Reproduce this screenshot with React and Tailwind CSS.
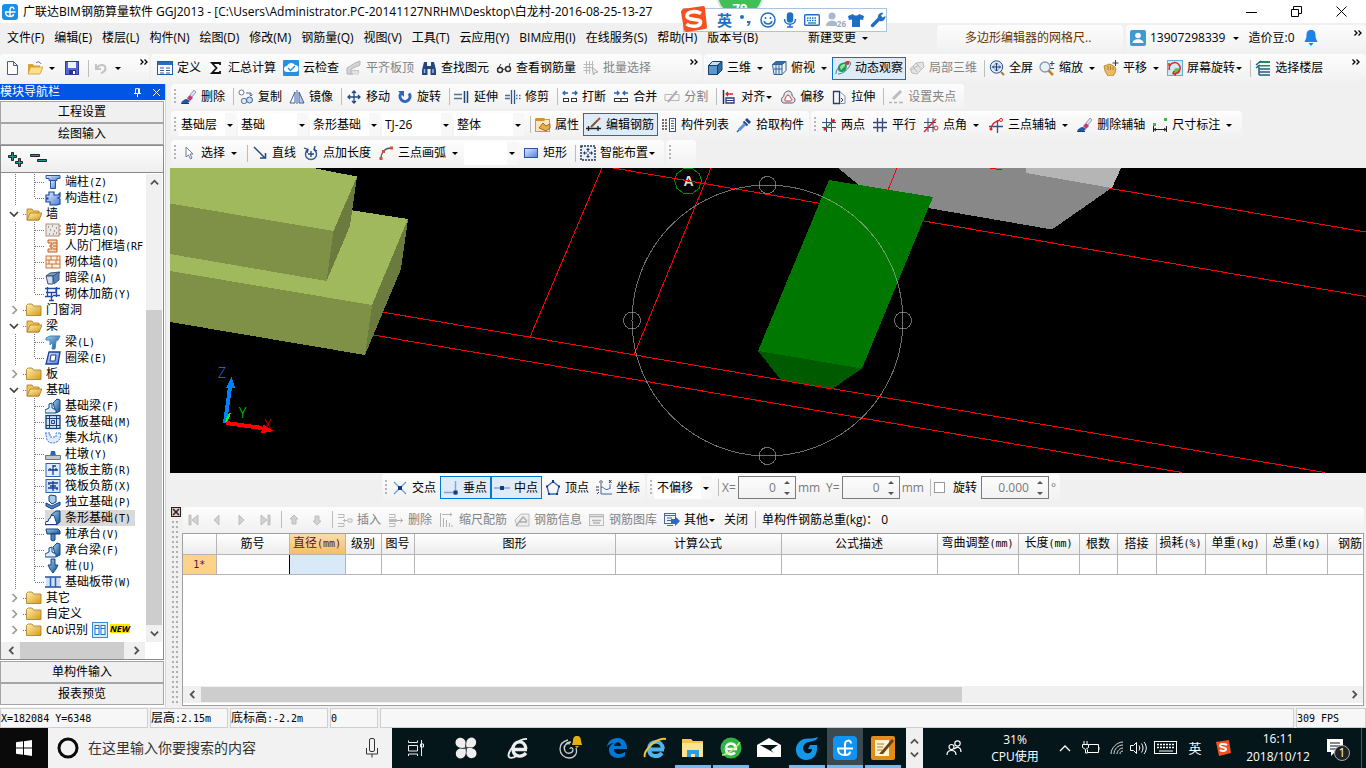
import React from "react";

const S = ({ d, c = "#1f3f77", w = 1, f = "none" }) => (
  <path d={d} stroke={c} strokeWidth={w} fill={f} />
);

const gradients = (
  <defs>
    <linearGradient id="gFolder" x1="0" y1="0" x2="1" y2="1">
      <stop offset="0" stopColor="#fff0b0" />
      <stop offset="1" stopColor="#d69a1c" />
    </linearGradient>
    <linearGradient id="gBlue" x1="0" y1="0" x2="1" y2="1">
      <stop offset="0" stopColor="#e2ecff" />
      <stop offset="1" stopColor="#4f7fd8" />
    </linearGradient>
    <linearGradient id="gSteel" x1="0" y1="0" x2="1" y2="1">
      <stop offset="0" stopColor="#a9d0ee" />
      <stop offset="1" stopColor="#0d4a8c" />
    </linearGradient>
  </defs>
);

const icons = {
  app: (<><rect width="16" height="16" rx="3" fill="#1a8fe8" /><S d="M3 8h10.500M8 13V6c0-3.500 4-3.500 4-.5M3.500 8c0 3.500 1.500 4.500 4.500 4.500 2 0 3.500-1 3.500-2.500" c="#fff" w={1.400} /></>),
  new: <S d="M3.500 1.500h6l4 4v9h-10zM9.500 1.500v4h4" c="#3f5e92" f="#fff" />,
  open: (<><path d="M1 4h5l1 1.500h6V13H1z" fill="#d8a63c" /><path d="M3.500 7H16l-3 7H1z" fill="#ffe08a" stroke="#c98f21" strokeWidth=".7" /><S d="M9 3c2-2 4-1 5 1" c="#3769ad" /></>),
  save: (<><rect x="1.500" y="1.500" width="13" height="13" fill="#5368d6" stroke="#2d3a98" /><rect x="4" y="2" width="8" height="6" fill="#eef2ff" /><rect x="5" y="10" width="7" height="4.500" fill="#2c367f" /><rect x="9" y="11" width="2" height="3" fill="#fff" /></>),
  undo: <S d="M3 4v5h5M3.500 8.500C6 4 12 4 12.500 8S9 12 8 13.500" c="#c4c4c4" w={2} />,
  define: (<><rect x="0.500" y="1.500" width="15" height="13" fill="#fff" stroke="#1f5fa8" /><rect x="1" y="2" width="14" height="3" fill="#2a6cc0" /><S d="M3 8h4M3 10.500h4M3 13h4M9 8h4M9 10.500h4M9 13h4" c="#33588c" /></>),
  sigma: <S d="M12 5V3H4l4.500 5L4 13h8v-2" c="#111" w={1.800} />,
  cloud: (<><rect width="16" height="16" rx="1" fill="#2490e0" /><path d="M4 12a3 3 0 0 1 0-6 4.500 4.500 0 0 1 8-1 3.500 3.500 0 0 1 0 7z" fill="#fff" /><S d="M5 8l2.500 2.500L12 6" c="#2490e0" w={1.500} /></>),
  flatTop: (<><path d="M1 8l8-5 5-2v4L5 9v5H1z" fill="#d4d4d4" stroke="#b5b5b5" /><path d="M5 10h8v5H3z" fill="#c4c4c4" /><S d="M6 12h6M7 14h6" c="#fff" /></>),
  binoc: (<><path d="M3 2h3v4h4V2h3l2 8v5H9.500V9h-3v6H1v-5z" fill="#24457e" /><S d="M3.500 9v4M12 9v4" c="#9db9e5" w={1.500} /></>),
  glasses: (<><circle cx="4" cy="10" r="2.500" fill="none" stroke="#333" strokeWidth="1.500" /><circle cx="12" cy="9" r="2.500" fill="none" stroke="#333" strokeWidth="1.500" /><S d="M6.500 9.500l3-.5M2 9l3-5M13 7l1-4" c="#333" /></>),
  batch: (<><S d="M0.500 4.500h10M0.500 7.500h8M0.500 10.500h7M3.500 1v13M6.500 1v13M9.500 1v6" c="#b9b9b9" /><path d="M9 7l6 5-3 .5L10.500 15z" fill="#eee" stroke="#aaa" /></>),
  cube: (<><path d="M1 5h9v10H1z" fill="#5d97cb" /><path d="M1 5l4-4h10l-5 4z" fill="#c6e0f4" /><path d="M10 5l5-4v9l-5 5z" fill="#2f6da8" /><S d="M1.500 5.500h9v9h-9zM1.500 5.500l4-4h9.500l-4.500 4M10.500 14.500l4.500-4.500V1.500" c="#183e69" /></>),
  topview: (<><path d="M1 4.500l4-3h10l-4 3z" fill="#2e6fb4" /><path d="M1 4.500h10l-1 10H3z" fill="#e4effa" /><S d="M1.500 4.500h9.500v10H3zM11 4.500l4-3v9l-4 4M1.500 4.500L5 1.500h10M5 5v9M8 5v9M3 9h8" c="#2f5f99" /></>),
  orbit: (<><path d="M3 8c0-4 4-6 8-5 2 4 0 9-4 9-3 0-4-1-4-4z" fill="#1f9d55" /><path d="M5 7c1-3 3-3 5-3l0 2-4 4z" fill="#8ce59a" /><S d="M1 14C0 9 9 1 14 1.500S11 14 3 14" c="#4a7c8c" /><circle cx="12.500" cy="3" r="2" fill="#d8342a" /></>),
  local3d: (<><path d="M1 9l6-6 7-1 1 5-7 7-5-1z" fill="#e4e4e4" stroke="#bbb" /><S d="M4 6l4 6M7 3l5 6M2 10l8-5" c="#bbb" /></>),
  full: (<><circle cx="7.500" cy="7" r="6.200" fill="#dce9fb" stroke="#274f8d" /><S d="M7.500 3v8M3.500 7h8M6 4.500l1.500-1.500L9 4.500M6 9.500L7.500 11 9 9.500M5 5.500L3.500 7 5 8.500M10 5.500L11.500 7 10 8.500" c="#1a3568" /><S d="M12 12l3 3" c="#b07b2b" w={2} /></>),
  zoom: (<><circle cx="6" cy="7" r="5" fill="#e8f2fc" stroke="#8a99ae" strokeWidth="1.300" /><S d="M9.500 10.500L14 15" c="#c38326" w={2.500} /><S d="M13 1v5M11 3.500h4.500M11 8.500h4" c="#26497e" /></>),
  pan: (<><path d="M1 6l3-1 2-1 3 1 3 2 1 2-1 4-2 3H5L2 11z" fill="#e8bd62" stroke="#ac7b24" strokeWidth=".8" /><S d="M5 6v4M7.500 6v4M10 7v3" c="#ac7b24" /><S d="M12.500 0v6M9.500 3h6" c="#203c67" /></>),
  rotScr: (<><rect x=".5" y=".5" width="15" height="15" fill="#ccebf5" stroke="#63aecf" /><circle cx="10" cy="11" r="3" fill="#7ab84a" /><S d="M2.500 10a5.500 5.500 0 1 1 4 3.500M7 11l-1 2.500 3 1.500M2 3l0 3" c="#dd2929" w={1.500} /></>),
  floors: (<><path d="M5 1h10v2H3zM3 5h12v1.500H2z" fill="#23885c" /><S d="M1 5l5-4M4 9h11M4 12h11M4 15h11M1 8l4-3M4 7v8" c="#1c6287" w={1.500} /></>),
  erase: (<><path d="M0 15c0-3 4-5 6-5l3 2-3 3z" fill="#2456a5" /><path d="M6 9l3-3 3 3-3 3z" fill="#c03b71" /><path d="M9 6l4-5 2 2-4 5z" fill="#d9e3ef" stroke="#667b99" strokeWidth=".7" /><S d="M1 14.500h7" c="#163c7d" /></>),
  copy: (<><circle cx="3.500" cy="3.500" r="2.500" fill="#fff" stroke="#60779c" /><circle cx="6" cy="12" r="2.700" fill="#dce9f7" stroke="#60779c" /><circle cx="11.500" cy="11" r="3" fill="#c9dbf2" stroke="#426396" /><S d="M8 4h5v3M11.500 5.500L13 7l1.500-1.500" c="#49678f" /></>),
  mirror: (<><path d="M1 14h5V3z" fill="#fff" stroke="#3b5f98" /><path d="M15 14h-5V3z" fill="#b6cdec" stroke="#3b5f98" /><S d="M8 1v14" c="#3b5f98" /></>),
  move: <S d="M8 2v12M2 8h12M6 4l2-2 2 2M6 12l2 2 2-2M4 6L2 8l2 2M12 6l2 2-2 2" c="#244a80" w={1.300} />,
  rotate: (<><S d="M4 4.500a5 5 0 1 0 8 0" c="#2f65bd" w={3} /><path d="M1 2h6v6z" fill="#2f65bd" /></>),
  extend: (<><S d="M0 5.500h8M0 9.500h8" c="#4c70a0" w={1.300} /><S d="M10.500 2v12M13.500 2v12" c="#1f4779" w={1.500} /></>),
  trim: (<><S d="M0 6.500h5M0 9.500h5M11 6.500h1.500M14 6.500h1.500M11 9.500h1.500M14 9.500h1.500" c="#4a709f" w={1.300} /><S d="M6.500 1v14M9.500 1v14" c="#2b5b91" w={1.300} /></>),
  brk: (<><S d="M1 4h5M10 4h5M3 2L1 4l2 2M13 2l2 2-2 2" c="#2f62ad" w={1.300} /><rect x="1.500" y="9.500" width="5" height="3" fill="#fff" stroke="#333" /><rect x="9.500" y="9.500" width="5" height="3" fill="#fff" stroke="#333" /></>),
  merge: (<><S d="M1 4h5M10 4h5M4 2l2 2-2 2M12 2l-2 2 2 2" c="#2f62ad" w={1.300} /><rect x="1.500" y="9.500" width="6.500" height="3" fill="#fff" stroke="#333" /><rect x="8" y="9.500" width="6.500" height="3" fill="#fff" stroke="#333" /></>),
  split: (<><S d="M1 5.500h7M1 11.500h14M11 5.500h4v6M1 5.500v6" c="#b6b6b6" /><S d="M4 13L13 2" c="#b0b0b0" w={2} /></>),
  align: (<><S d="M2.500 1v14" c="#1c2d55" w={1.500} /><path d="M5 9h8v5H5z" fill="#fff" stroke="#243f7d" strokeWidth="1.300" /><S d="M12 5H5M7 3L5 5l2 2" c="#c7282e" w={1.300} /><S d="M5 11.500h8" c="#243f7d" /></>),
  offset: (<><path d="M1.500 10.500C1.500 8 4 8 4 6s2-4 4.500-4S12 4 12 6s3 2 3 5-3 3-4 3H4c-1.500 0-2.500-1-2.500-3.500z" fill="#e6e6ec" stroke="#59617a" /><path d="M5 10c1-1 1-4 3-4s2 3 3.500 4-1 2-1 2h-5s-1-.5-.5-2z" fill="#fff" stroke="#cc3333" /></>),
  stretch: (<><S d="M2.500 2.500h6v12h-6z" c="#1f3f77" w={1.300} /><S d="M9 3l5 4v7.500H9" c="#7f95b7" /><S d="M10 9l2 2-2 2" /></>),
  grip: (<><S d="M1 13.500h3M6 13.500h3M11 13.500h4" c="#b4b4b4" w={1.500} /><S d="M5 10L13 2" c="#bcbcbc" w={3} /></>),
  prop: (<><rect x=".5" y="2.500" width="14" height="12" fill="#fce7bd" stroke="#d39a3c" /><rect x=".5" y="1" width="9" height="3" fill="#d98f2b" /><path d="M4 11l4-5 3 3 4-2v4l-4 3z" fill="#e9ad42" stroke="#7d5a22" strokeWidth=".8" /></>),
  editBar: (<><S d="M0 11.500h15M2.500 9v5M12 9v5" c="#222" w={1.300} /><S d="M5 10l7-7" c="#7b5a2b" w={2} /><S d="M12 3l2-2" c="#d33" w={2} /></>),
  list: (<><S d="M1 3h2M1 6h2M1 9h2M1 12h2M4 3h2M4 6h2M4 9h2M4 12h2" c="#444" w={1.300} /><rect x="8.500" y="1.500" width="6" height="13" fill="#fff" stroke="#2a5596" /><S d="M10 4h3M10 6.500h3M10 9h3M10 11.500h3" c="#2a5596" /></>),
  pick: (<><path d="M9 3l2-2 4 4-2 2z" fill="#1c4689" /><S d="M7.500 4.500l4 4" c="#1c4689" w={2} /><S d="M9 7l-6 6" c="#5b93dc" w={3} /><S d="M1 15l2-2" c="#24579f" w={1.500} /></>),
  axis2: (<><S d="M1 5.500h14M1 10.500h14M5.500 1v14M10.500 1v14" c="#324f86" /><S d="M3 13L13 3" c="#31853b" w={1.300} /><circle cx="4" cy="12" r="1.500" fill="#d22" /><circle cx="12.500" cy="3.500" r="1.500" fill="#d22" /></>),
  axisP: <S d="M1 5.500h14M1 10.500h14M5.500 1v14M10.500 1v14" c="#33487c" w={1.300} />,
  axisA: (<><S d="M1 5.500h12M1 10.500h12M5 1v14M10 1v14" c="#324f86" /><S d="M1 15L13 2" c="#d22" w={1.300} /><circle cx="13" cy="11" r="2" fill="#fff" stroke="#d22" /></>),
  axis3: (<><S d="M1 9.500h14M9.500 4v12" c="#324f86" w={1.300} /><S d="M3 13C3 7 8 3 14 3" c="#d22" w={1.300} /><circle cx="3" cy="12" r="1.500" fill="#d22" /><circle cx="13" cy="3" r="1.500" fill="#fff" stroke="#d22" /></>),
  dim: (<><S d="M1.500 9v6M14.500 9v6M2 12.500h12M4 11l-2 1.500L4 14M12 11l2 1.500-2 1.500" c="#222" /><rect x="1" y="6" width="3" height="3" fill="#3fb54d" /><rect x="12" y="1" width="3" height="3" fill="#3fb54d" /></>),
  cursor: <path d="M5 2v10l2.500-2 2 4 1.500-1-2-4h3z" fill="#fff" stroke="#6f7b93" />,
  line: (<><S d="M2 2l11 11" c="#204685" w={1.500} /><S d="M8 13h5.500V8" c="#204685" w={1.500} /></>),
  len: (<><S d="M5 4.500a5.500 5.500 0 1 0 6 0" c="#375c96" w={1.500} /><S d="M8 6v6M5 9h6M1 3l4 1.500L4 8M12 1l-1 3.500 3 1.500" c="#22457f" w={1.300} /></>),
  arc: (<><S d="M3 14C3 7 7 3 13 3" c="#365d9c" w={1.300} /><rect x="1.500" y="12" width="3" height="3" fill="#d4532b" /><rect x="4" y="5" width="3" height="3" fill="#d4532b" /><rect x="12" y="1.500" width="3" height="3" fill="#d4532b" /></>),
  rect: <rect x="1.500" y="3.500" width="13" height="9" fill="url(#gBlue)" stroke="#2955a8" />,
  smart: (<><rect x="1" y="1" width="14" height="14" fill="#e7f0fa" stroke="#25354f" strokeDasharray="2 1" strokeWidth="1.500" /><S d="M8 3v4M8 9v4M3 8h4M9 8h4M6.500 4.500h3M6.500 11.500h3M4.500 6.500v3M11.500 6.500v3" c="#25354f" /></>),
  cross: (<><S d="M2 2l12 12M14 2L2 14" c="#6c9bd6" w={1.300} /><rect x="6" y="6" width="4" height="4" fill="#143c82" /></>),
  perp: (<><S d="M12.500 1v14M1 12.500h14" c="#7ea6da" w={1.500} /><rect x="10.500" y="10.500" width="4" height="4" fill="#143c82" /></>),
  mid: (<><S d="M0 8h16" c="#7ea6da" w={1.500} /><rect x="6" y="6" width="4" height="4" fill="#143c82" /></>),
  vertex: (<><S d="M8 1.500l6 5L12 14H4L2 6.500z" c="#3867ad" w={1.300} /><rect x="7" y="0" width="2" height="3" fill="#143c82" /><rect x="1" y="5.500" width="2" height="2" fill="#143c82" /><rect x="13" y="5.500" width="2" height="2" fill="#143c82" /><rect x="3" y="13" width="2" height="2" fill="#143c82" /><rect x="11" y="13" width="2" height="2" fill="#143c82" /></>),
  coord: (<><S d="M5 4v10h11M5 7c4 0 4 5 9 1M14 4v5" c="#3867ad" /><circle cx="5" cy="2" r="1.300" fill="none" stroke="#333" strokeWidth=".7" /><S d="M13 0l2.500 3M15.500 0L13 3M0 7h3M0 10h3M1 14l2-2" c="#333" /></>),
  ins: (<><S d="M1 2.500h6v3H1M1 11.500h6v3H1M11 7h4v3h-4zM10 8.500H6M8 7L6.500 8.500 8 10" c="#b8b8b8" /></>),
  del: (<><S d="M1 2.500h6v3H1M1 11.500h6v3H1" c="#b8b8b8" /><path d="M1 7h8v3H1z" fill="#bcbcbc" /><S d="M9 8.500h6M12.500 6.500l2 2-2 2" c="#aaa" /></>),
  scale: <S d="M1.500 1v14M3 2.500h10M11 1l2 1.500L11 4M4.500 6v9M7.500 8v7M10.500 11v4M13 13v2" c="#b4b4b4" />,
  info: (<><path d="M1 8l6-6 8 0v12H3z" fill="#eee" stroke="#bcbcbc" /><S d="M2 14L9 5l4 4M5 10h8" c="#aaa" w={1.300} /></>),
  lib: (<><rect x=".5" y="2.500" width="14" height="11" fill="#f2f2f2" stroke="#bbb" /><S d="M1 4.500h13M3 8.500h9M4 11h7" c="#b4b4b4" w={1.500} /></>),
  other: (<><rect x=".5" y="1.500" width="11" height="10" fill="#edf4ff" stroke="#4d679a" /><S d="M1 3.500h10M3 6h5M3 8.500h4M3 13.500h6" c="#4d679a" /><path d="M7 7h4V4l5 5-5 5v-3H7z" fill="#2f65c4" /></>),
  endCol: (<><path d="M1 1.500h14v3h-3v2H4v-2H1z" fill="url(#gBlue)" stroke="#2553a0" /><path d="M5.500 6.500h5v8h-5z" fill="url(#gBlue)" stroke="#2553a0" /></>),
  conCol: (<><path d="M1 5h3V2h5v3h4l2-2v4l-2 1 2 1v5l-3 1H5v-3H1V9h2V8H1z" fill="url(#gBlue)" stroke="#1c4a96" strokeWidth="1.200" /></>),
  shear: (<><rect x="1" y="2" width="13" height="12" fill="#e9e9e9" stroke="#b98d74" /><S d="M3 5h1M7 4h1M11 6h1M5 8h1M9 9h1M4 12h1M8 12h1M11 11h1" c="#555" /><S d="M14 4h2M14 8h2M14 12h2" c="#d2732e" /></>),
  doorWall: (<><path d="M3 2h9v12H3v-3h4V9H5V7h2V5H3z" fill="#ffd9bb" stroke="#c15a21" /><S d="M8 5h4M8 8h4M8 11h4" c="#c15a21" /></>),
  brick: (<><rect x="1" y="2" width="14" height="12" fill="#fff0e0" stroke="#c8743c" /><S d="M1 6h14M1 10h14M6 2v4M11 6v4M4 6v4M7 10v4M12 2v4" c="#c8743c" /></>),
  hidBeam: (<><path d="M1 6l4-3 10-1-4 4z" fill="#8aa0bb" stroke="#34527c" /><path d="M1 6h7v8H3z" fill="#cbdcef" stroke="#34527c" /><path d="M8 6l6-4v8l-5 4z" fill="#5a82b0" stroke="#34527c" /></>),
  reinf: <S d="M0 2.500h15M1 6.500h10v-5M2.500 1v10M6.500 6v9M0 10.500h8M11.500 1v10M8 9.500h7M4 14.500h5" c="#1c4bb0" w={1.300} />,
  beam: <path d="M1 4l4-2h10l-2 4-2 1-1 8H7l1-7-3 3V6H1z" fill="url(#gSteel)" stroke="#3d85c6" />,
  ring: (<><path d="M4 2h11l-2 12H1z" fill="url(#gBlue)" stroke="#183e91" strokeWidth="1.300" /><path d="M6 5h5l-1 6H5z" fill="#fff" stroke="#183e91" /></>),
  fBeam: (<><path d="M8 5l4-4 3 1v11l-4 2z" fill="url(#gSteel)" stroke="#0d4a8c" /><path d="M0 15v-3l4-2V6l3-1v5l4 2v3z" fill="#dcebf8" stroke="#0d4a8c" /></>),
  raft: (<><rect x="1" y="1.500" width="14" height="13" fill="#cfe2f4" stroke="#14417c" strokeWidth="1.300" /><S d="M1 4.500h14M1 11.500h14M4.500 1.500v13M11.500 1.500v13M6.500 6.500h3v3h-3z" c="#14417c" /></>),
  pit: <path d="M0 3h5v4h6V3h5c-1 3 0 4-2 7s-9 5-12 0C1 8 2 6 0 3z" fill="#e1edff" stroke="#3e78c8" strokeDasharray="2 1" />,
  pier: (<><path d="M5 10l1-5h4l1 5z" fill="#2c62ba" /><path d="M0.500 9.500h15v4H.5z" fill="#c3c7cd" stroke="#6e7580" /></>),
  mainBar: (<><rect x="1" y="1.500" width="14" height="13" fill="#e2eeff" stroke="#2c62ba" /><S d="M8 3v10M3 8h10M5 6v2M11 6v3M8 4h3" c="#173f8e" w={1.300} /></>),
  negBar: (<><rect x="1" y="1.500" width="14" height="13" fill="#d4e4fb" stroke="#2c62ba" /><S d="M3 5h10M3 10h10M8 3v10M4 5v2M12 10v2M5 8h6" c="#173f8e" w={1.300} /></>),
  isoF: (<><path d="M1 9l6 3 8-4v3l-8 4-6-3z" fill="#4d87c4" stroke="#103d7b" /><path d="M4 7V2l2-1 5 1v6l-4 2z" fill="#a6cbec" stroke="#103d7b" /></>),
  strip: (<><path d="M6 5l5-4h4v11l-4 3-1-5z" fill="url(#gSteel)" stroke="#14437f" /><path d="M0 14.500l1-3h2l1-3h1l1-3h3l1 3 1 3 1 3z" fill="#fff" stroke="#14437f" /></>),
  cap: (<><path d="M1 3h12l2 2v3H2z" fill="url(#gSteel)" stroke="#14437f" /><path d="M6 8h4v6l-2 1-2-1z" fill="#4c86c4" stroke="#14437f" /></>),
  pile: <path d="M6 1h4v6h3l-2 4-3 4-3-4-2-4h3z" fill="url(#gSteel)" stroke="#14437f" />,
  band: (<><path d="M1 3h14v10H1z" fill="#cfe1fb" /><S d="M0 3h16M0 13h16" c="#2a4f96" w={1.300} /><S d="M5.500 3v10M10.500 3v10" c="#2a62c4" w={1.500} /></>),
  folderO: (<><path d="M1 3h5l1.500 2H13v9H1z" fill="#f0c659" stroke="#a8791c" strokeWidth=".8" /><path d="M4 7h12l-3 7H1z" fill="url(#gFolder)" stroke="#a8791c" strokeWidth=".8" /></>),
  folder: (<path d="M.5 3.500L2 2h4l1.500 2H15v9.500H.5z" fill="url(#gFolder)" stroke="#a8791c" strokeWidth=".8" />),
  cad: (<><rect x=".5" y=".5" width="15" height="15" fill="#d6ecff" stroke="#3a8ad8" /><rect x="3" y="3.500" width="4" height="9" fill="#fff" stroke="#1b74cc" /><rect x="9" y="3.500" width="4" height="9" fill="#fff" stroke="#1b74cc" /><S d="M3 6.500h4M9 6.500h4" c="#1b74cc" /></>),
};

const Ico = ({ n, cls = "size-4" }) => (
  <svg viewBox="0 0 16 16" className={`shrink-0 ${cls}`} aria-hidden="true">{icons[n]}</svg>
);

const Caret = ({ cls = "w-[10px]" }) => (
  <svg viewBox="1 0 8 10" className={`h-[10px] shrink-0 ${cls}`} aria-hidden="true"><path d="M2 4h6L5 7z" fill="#000" /></svg>
);

const Item = ({ i, t, drop, tight, off, on }) => (
  <button
    type="button"
    aria-label={t ? undefined : i}
    className={`flex h-[23px] shrink-0 items-center gap-1 whitespace-nowrap border pl-[2px] pr-[3px] ${on ? "border-[#0078d7] bg-[#dfebf6]" : "border-transparent"} ${off ? "text-[#838383]" : "text-black"}`}
  >
    {i && <Ico n={i} />}
    {t && <span>{t}</span>}
    {drop && <Caret />}
    {tight && <Caret cls="-ml-1 w-2" />}
  </button>
);

const Sep = () => <div className="ml-1 mr-px h-[17px] w-px shrink-0 bg-[#bdbdbd]" />;

const Grip = () => (
  <svg viewBox="0 0 7 18" className="h-[18px] w-[7px] shrink-0" aria-hidden="true">
    <path d="M4 1v16" stroke="#b5b5b5" strokeWidth="2" strokeDasharray="2 2" />
  </svg>
);

const Bar = ({ children, cls = "" }) => (
  <div className={`flex items-center overflow-hidden rounded-sm bg-gradient-to-b from-[#fdfdfd] to-[#f1f1f1] ${cls}`}>{children}</div>
);

const Combo = ({ v, label, cls = "w-[70px]" }) => (
  <div className={`mr-[2px] grid h-[23px] shrink-0 items-center bg-white ${cls}`}>
    <select aria-label={label} className="col-start-1 row-start-1 h-full w-full appearance-none border-0 bg-transparent pl-[3px] text-black outline-none">
      <option>{v}</option>
    </select>
    <span className="pointer-events-none col-start-1 row-start-1 flex h-full w-[11px] items-center justify-self-end bg-[#f7f7f7]"><Caret /></span>
  </div>
);

const More = ({ cls = "" }) => (
  <button type="button" aria-label="更多" className={`flex h-full shrink-0 items-start pt-[5px] ${cls}`}>
    <svg viewBox="0 0 8 6" className="h-[6px] w-2"><path d="M.5 .5L3 3 .5 5.500M4.500 .5L7 3 4.500 5.500" stroke="#000" strokeWidth="1.300" fill="none" /></svg>
  </button>
);

/* Bitmap-style text: CJK at 12px, Latin in half-width cells */
const Sim = ({ children }) => (
  <span className="whitespace-pre">
    {children.split(/([\x20-\x7e]+)/).map((p, k) =>
      k % 2 ? <span key={k} className="font-['DejaVu_Sans_Mono',monospace] text-[10px]">{p}</span> : p
    )}
  </span>
);

const menus = ["文件(F)", "编辑(E)", "楼层(L)", "构件(N)", "绘图(D)", "修改(M)", "钢筋量(Q)", "视图(V)", "工具(T)", "云应用(Y)", "BIM应用(I)", "在线服务(S)", "帮助(H)", "版本号(B)"];

function Ime() {
  return (
    <div className="absolute left-[679px] top-0 z-10 h-[34px] w-[208px]">
      <div className="absolute -top-[30px] left-[37px] flex h-[48px] w-[48px] items-end justify-center rounded-full border-2 border-[#d8e8da] bg-[#3fbf55] text-[13px] font-bold text-white">79</div>
      <div className="absolute left-1 top-2 flex h-6 w-[204px] items-center gap-[6px] border border-[#a9c3e0] bg-white pl-[33px]">
        <span className="text-[15px] font-bold leading-none text-[#1f6fc5]">英</span>
        <svg viewBox="0 0 16 16" className="size-4"><circle cx="4" cy="5" r="2" fill="#1f6fc5" /><path d="M9 9h3.500c0 3-1 4.500-3 5l-.5-1c1-.5 1.500-1 1.500-2H9z" fill="#1f6fc5" /></svg>
        <svg viewBox="0 0 16 16" className="size-4" fill="none" stroke="#1f6fc5" strokeWidth="1.500"><circle cx="8" cy="8" r="7" /><path d="M4 9c1 4 7 4 8 0M5.500 5v2M10.500 5v2" /></svg>
        <svg viewBox="0 0 16 16" className="size-4" fill="none" stroke="#1f6fc5" strokeWidth="1.500"><rect x="5.500" y="1" width="5" height="9" rx="2.500" fill="#1f6fc5" /><path d="M2.500 7c0 7 11 7 11 0M8 12v3M5 15h6" /></svg>
        <svg viewBox="0 0 16 16" className="size-4"><rect x=".7" y="2.700" width="14.600" height="10.600" rx="1" fill="none" stroke="#1f6fc5" strokeWidth="1.400" /><path d="M3 6h10M3 8.500h10" stroke="#1f6fc5" strokeWidth="1.500" strokeDasharray="1.500 1" /><path d="M4 11h8" stroke="#1f6fc5" strokeWidth="1.300" /></svg>
        <span className="relative size-4">
          <svg viewBox="0 0 16 16" className="size-4" fill="#a9b8cd"><circle cx="6" cy="4" r="3.500" /><path d="M0 14c0-7 12-7 12 0z" /></svg>
          <span className="absolute -right-1 bottom-0 bg-white text-[8px] font-bold leading-[8px] text-[#98a8c0]">26</span>
        </span>
        <svg viewBox="0 0 16 16" className="size-4"><path d="M5 2c1 2 5 2 6 0l5 2-1 4-3-.5V15H4V7.500L1 8 0 4z" fill="#1f6fc5" /></svg>
        <svg viewBox="0 0 16 16" className="size-4"><path d="M2.500 13.500L9 7" stroke="#1f6fc5" strokeWidth="3.500" strokeLinecap="round" /><path d="M8 7c-1-4 2-7 5.500-6L11 3.500l1.500 2L15.500 4c0 4-3 6-6 5z" fill="#1f6fc5" /></svg>
      </div>
      <svg viewBox="0 0 28 28" className="absolute left-0 top-[5px] size-[28px]"><path d="M4 4l20-3q2 0 2 2l2 19q0 2-2 2L8 27q-2 0-3-2L2 7q0-2 2-3z" fill="#f4511e" /><path d="M22 8.500c-6-3.500-15-1.500-14 3s14 1.500 13.500 6-10 5-14 1.500" stroke="#fff" strokeWidth="3.600" fill="none" /></svg>
    </div>
  );
}

function Title() {
  return (
    <header className="flex h-[23px] shrink-0 items-center bg-white pl-[2px]">
      <Ico n="app" />
      <h1 className="ml-[5px] whitespace-nowrap">广联达BIM钢筋算量软件 GGJ2013 - [C:\Users\Administrator.PC-20141127NRHM\Desktop\白龙村-2016-08-25-13-27</h1>
      <div className="ml-auto flex items-center gap-[34px] pr-[19px]">
        <button type="button" aria-label="最小化"><svg viewBox="0 0 11 11" className="size-[11px]"><path d="M0 6.500h11" stroke="#000" /></svg></button>
        <button type="button" aria-label="还原"><svg viewBox="0 0 11 11" className="size-[11px]"><path d="M.5 3.500h7v7h-7zM2.500 3V.5h8v7H8" stroke="#000" fill="none" /></svg></button>
        <button type="button" aria-label="关闭窗口"><svg viewBox="0 0 11 11" className="size-[11px]"><path d="M.5 .5l10 10M10.500 .5l-10 10" stroke="#000" /></svg></button>
      </div>
    </header>
  );
}

function MenuRow() {
  return (
    <div className="flex h-[30px] shrink-0 items-center">
      <nav className="flex flex-1 items-center gap-[10px] whitespace-nowrap pl-[7px]">
        {menus.map((m) => <button type="button" key={m}>{m}</button>)}
        <button type="button" className="ml-10 flex items-center gap-1">新建变更<Caret /></button>
      </nav>
      <Bar cls="mr-[3px] h-[27px] w-[186px] shrink-0 pl-7"><a href="#news" className="text-[#663300]">多边形编辑器的网格尺..</a></Bar>
      <Bar cls="h-[27px] w-[240px] shrink-0 pl-1">
        <svg viewBox="0 0 16 16" className="size-4"><rect width="16" height="16" rx="2" fill="#3f9ad2" /><circle cx="8" cy="5.500" r="2.800" fill="#fff" /><path d="M2.500 13c0-5 11-5 11 0z" fill="#fff" /></svg>
        <button type="button" className="ml-1 flex items-center gap-[6px]">13907298339<Caret /></button>
        <span className="ml-[7px]">造价豆:0</span>
        <svg viewBox="0 0 14 16" className="ml-[9px] h-4 w-[14px]"><path d="M7 0c3.500 0 4.500 2 4.500 5.500 0 3 1 4 2 6.500H.5c1-2.500 2-3.500 2-6.500C2.500 2 3.500 0 7 0zM4.500 13h5L7 16z" fill="#1e82e6" /></svg>
        <More cls="ml-auto mr-1" />
      </Bar>
    </div>
  );
}

function MainBar() {
  return (
    <div className="mb-px flex h-[30px] shrink-0 items-center gap-[2px]">
      <Bar cls="h-[28px] w-[149px] shrink-0 pl-px">
        <Item i="new" /><Item i="open" drop /><Item i="save" /><Sep /><Item i="undo" drop /><More cls="ml-auto mr-px" />
      </Bar>
      <Bar cls="h-[28px] w-[551px] shrink-0 pl-[3px]">
        <Item i="define" t="定义" /><Item i="sigma" t="汇总计算" /><Item i="cloud" t="云检查" /><Item i="flatTop" t="平齐板顶" off /><Item i="binoc" t="查找图元" /><Item i="glasses" t="查看钢筋量" /><Item i="batch" t="批量选择" off /><More cls="ml-auto mr-1" />
      </Bar>
      <Bar cls="h-[28px] flex-1 [&>button]:pr-[2px]">
        <Item i="cube" t="三维" drop /><Item i="topview" t="俯视" drop /><Item i="orbit" t="动态观察" on /><Item i="local3d" t="局部三维" off /><Sep /><Item i="full" t="全屏" /><Item i="zoom" t="缩放" drop /><Item i="pan" t="平移" drop /><Item i="rotScr" t="屏幕旋转" tight /><Sep /><Item i="floors" t="选择楼层" /><More cls="ml-auto mr-1" />
      </Bar>
    </div>
  );
}

function EditBars() {
  return (
    <div className="flex flex-col items-start pb-px pl-px">
      <Bar cls="mb-px h-[25px] pr-1">
        <Grip /><Item i="erase" t="删除" /><Sep /><Item i="copy" t="复制" /><Item i="mirror" t="镜像" /><Sep /><Item i="move" t="移动" /><Item i="rotate" t="旋转" /><Sep /><Item i="extend" t="延伸" /><Item i="trim" t="修剪" /><Sep /><Item i="brk" t="打断" /><Item i="merge" t="合并" /><Item i="split" t="分割" off /><Sep /><Item i="align" t="对齐" tight /><Item i="offset" t="偏移" /><Item i="stretch" t="拉伸" /><Sep /><Item i="grip" t="设置夹点" off />
      </Bar>
      <div className="my-px flex gap-[2px]">
        <Bar cls="h-[27px] pr-px">
          <Grip /><Combo label="楼层" v="基础层" cls="w-[58px]" /><Combo label="构件类别" v="基础" /><Combo label="构件类型" v="条形基础" /><Combo label="构件" v="TJ-26" /><Combo label="分层" v="整体" /><Sep /><Item i="prop" t="属性" /><Item i="editBar" t="编辑钢筋" on /><Item i="list" t="构件列表" /><Item i="pick" t="拾取构件" />
        </Bar>
        <Bar cls="h-[27px] pr-1">
          <Grip /><Item i="axis2" t="两点" /><Item i="axisP" t="平行" /><Item i="axisA" t="点角" drop /><Item i="axis3" t="三点辅轴" drop /><Item i="erase" t="删除辅轴" /><Item i="dim" t="尺寸标注" drop />
        </Bar>
      </div>
      <div className="my-px flex gap-[2px]">
        <Bar cls="h-[26px] pr-1">
          <Grip /><Item i="cursor" t="选择" drop /><Sep /><Item i="line" t="直线" /><Item i="len" t="点加长度" /><Item i="arc" t="三点画弧" drop /><Combo label="画法参数" v="" cls="w-[54px]" /><Item i="rect" t="矩形" /><Sep /><Item i="smart" t="智能布置" tight />
        </Bar>
        <Bar cls="h-[26px] w-[30px]"><Grip /></Bar>
      </div>
    </div>
  );
}

const tree = [
  ["c", "endCol", "端柱(Z)"], ["e", "conCol", "构造柱(Z)"],
  ["o", "", "墙"], ["c", "shear", "剪力墙(Q)"], ["c", "doorWall", "人防门框墙(RF"], ["c", "brick", "砌体墙(Q)"], ["c", "hidBeam", "暗梁(A)"], ["e", "reinf", "砌体加筋(Y)"],
  ["g", "", "门窗洞"], ["o", "", "梁"], ["c", "beam", "梁(L)"], ["e", "ring", "圈梁(E)"],
  ["g", "", "板"], ["o", "", "基础"], ["c", "fBeam", "基础梁(F)"], ["c", "raft", "筏板基础(M)"], ["c", "pit", "集水坑(K)"], ["c", "pier", "柱墩(Y)"], ["c", "mainBar", "筏板主筋(R)"], ["c", "negBar", "筏板负筋(X)"], ["c", "isoF", "独立基础(P)"], ["c", "strip", "条形基础(T)"], ["c", "cap", "桩承台(V)"], ["c", "fBeam", "承台梁(F)"], ["c", "pile", "桩(U)"], ["e", "band", "基础板带(W)"],
  ["g", "", "其它"], ["g", "", "自定义"], ["g", "", "CAD识别"],
];

const Chev = ({ d, cls = "size-[9px]" }) => (
  <svg viewBox="0 0 10 10" className={`shrink-0 ${cls}`} aria-hidden="true"><path d={d} fill="none" stroke="#505050" strokeWidth="2" /></svg>
);
const UP = "M1 7l4-4 4 4", DOWN = "M1 3l4 4 4-4", LEFT = "M7 1L3 5l4 4", RIGHT = "M3 1l4 4-4 4";

function TreeRow({ kind, icon, text }) {
  const child = kind === "c" || kind === "e";
  const sel = icon === "strip";
  return (
    <li className="flex h-4 items-center whitespace-nowrap">
      {child ? (
        <svg viewBox="0 0 41 16" className="h-4 w-[41px] shrink-0" shapeRendering="crispEdges">
          <path d={`M11.500 0v16M30.500 0v${kind === "e" ? 8 : 16}M31 8.500h10`} stroke="#777" strokeDasharray="1 1" fill="none" />
        </svg>
      ) : (
        <svg viewBox="0 0 22 16" className="h-4 w-[22px] shrink-0">
          <path d={kind === "o" ? "M6 6l4 4 4-4" : "M8.500 4l4 4-4 4"} fill="none" stroke={kind === "o" ? "#404040" : "#9a9a9a"} strokeWidth="1.700" />
          <path d="M19 8.500h3" stroke="#777" strokeDasharray="1 1" />
        </svg>
      )}
      <button type="button" className={`flex h-4 items-center gap-1 pr-1 ${sel ? "bg-[#d9d9d9]" : ""}`}>
        <Ico n={child ? icon : kind === "o" ? "folderO" : "folder"} />
        <Sim>{text}</Sim>
        {text === "CAD识别" && (
          <span className="flex items-center gap-[2px]">
            <Ico n="cad" />
            <span className="mb-1 bg-[#ffe600] text-[9px] font-bold italic leading-[9px]">NEW</span>
          </span>
        )}
      </button>
    </li>
  );
}

function SideButton({ children }) {
  return <button type="button" className="h-[22px] w-full shrink-0 border border-[#a5a5a5] bg-[#f0f0f0]">{children}</button>;
}

function Side() {
  return (
    <aside className="flex w-[166px] shrink-0 flex-col border-r border-[#d5d5d5] bg-white pb-[2px]">
      <div className="flex h-4 shrink-0 items-center bg-[#0055e5] text-white">
        <h2>模块导航栏</h2>
        <button type="button" aria-label="固定" className="ml-auto"><svg viewBox="0 0 9 9" className="size-[9px]"><path d="M1 5.500h7M2.500 5V.7h4V5M5.500 1v4M4.500 6v3" stroke="#fff" fill="none" /></svg></button>
        <button type="button" aria-label="关闭导航" className="ml-[10px] mr-1"><svg viewBox="0 0 9 9" className="size-[9px]"><path d="M1 1l7 7M8 1L1 8" stroke="#fff" /></svg></button>
      </div>
      <div className="flex min-h-0 flex-1 flex-col pr-px pt-px">
        <SideButton>工程设置</SideButton>
        <SideButton>绘图输入</SideButton>
        <div className="flex min-h-0 flex-1 flex-col border border-[#8a8a8a]">
          <div className="flex h-[27px] shrink-0 items-center gap-[7px] border-b border-[#8a8a8a] bg-gradient-to-b from-[#fdfdfd] to-[#eeeeee] pl-[6px]">
            <button type="button" aria-label="全部展开"><svg viewBox="0 0 16 16" className="size-4"><path d="M4.500 1.500h2v3h3v2h-3v3h-2v-3h-3v-2h3z" fill="#1e9a93" stroke="#000" strokeWidth=".8" /><path d="M11.500 7.500h2v3h2v2h-2v3h-2v-3h-3v-2h3z" fill="#1e9a93" stroke="#000" strokeWidth=".8" /></svg></button>
            <button type="button" aria-label="全部折叠"><svg viewBox="0 0 17 16" className="h-4 w-[17px]"><path d="M.5 3.500h9v2h-9zM7.500 8.500h9v2h-9z" fill="#1e9a93" stroke="#000" strokeWidth=".8" /></svg></button>
          </div>
          <div className="flex min-h-0 flex-1 overflow-hidden pl-[3px] pt-px">
            <ul className="min-w-0 flex-1 overflow-hidden">
              {tree.map(([k, i, t]) => <TreeRow key={t} kind={k} icon={i} text={t} />)}
            </ul>
            <div className="mr-px flex w-4 shrink-0 flex-col items-center bg-[#f0f0f0] py-1">
              <Chev d={UP} />
              <div className="mt-[123px] w-full flex-1 bg-[#cdcdcd]" />
              <Chev d={DOWN} cls="mt-1 size-[9px]" />
            </div>
          </div>
          <div className="mr-[18px] flex h-[17px] shrink-0 items-center justify-between bg-[#f0f0f0] pl-[6px] pr-1">
            <Chev d={LEFT} />
            <div className="ml-1 mr-2 h-full flex-1 bg-[#cdcdcd]" />
            <Chev d={RIGHT} />
          </div>
        </div>
        <div className="mt-px"><SideButton>单构件输入</SideButton><SideButton>报表预览</SideButton></div>
      </div>
    </aside>
  );
}

function Viewport() {
  return (
    <div className="h-[305px] shrink-0 overflow-hidden bg-black">
      <svg viewBox="170 168 1196 305" preserveAspectRatio="xMinYMin slice" className="block h-full w-full" shapeRendering="crispEdges" fill="none">
        <g stroke="#ff0000">
          <path d="M382 312L1325 472.500M373 335L1182 472.500M613 168L1366 296.500M990 168L1366 232M602 168L530 337M711 168L634 355" />
        </g>
        <path d="M838 168H1121L1110 189L1052 229.500L876 199z" fill="#888888" />
        <path d="M1026 168H1121L1112 188L1026 173z" fill="#b5b5b5" />
        <path d="M897 168l-9 22M990 168l12 2" stroke="#ff0000" />
        <path d="M829 180L933 197L862 368.500L758 351z" fill="#007800" />
        <path d="M758 351L862 368.500L832 389L781 380z" fill="#005a00" />
        <path d="M781 380l51 9" stroke="#ff0000" />
        <path d="M313 168L357 176.500L350 210L408 219L372 305L170 271V168z" fill="#a0b95d" />
        <path d="M170 203.500L333.500 231L326.500 281L170 254zM170 271L372 305L365 355L170 322z" fill="#7f9147" />
        <path d="M333.500 231L357 176.500L350 226L326.500 281zM372 305L408 219L401 269L365 355z" fill="#6b7a3d" />
        <g stroke="#b8b8b8" strokeOpacity=".6">
          <circle cx="767.500" cy="320.500" r="135.500" />
          <circle cx="767.500" cy="185" r="8.500" /><circle cx="632" cy="320.500" r="8.500" /><circle cx="903" cy="320.500" r="8.500" /><circle cx="767.500" cy="456" r="8.500" />
        </g>
        <path d="M684 168.500h8l7 5 2.500 7-2.500 8-7 5h-8l-7-5-2.500-8 2.500-7z" stroke="#008a00" />
        <text x="688.500" y="186" textAnchor="middle" fill="#dcdcdc" className="font-['Liberation_Sans',sans-serif] text-[14px] font-bold">A</text>
        <path d="M675 178.500l26 4.500" stroke="#ff0000" />
        <path d="M225 423l5-36" stroke="#0080ff" strokeWidth="4" />
        <path d="M231.500 377l3.500 11h-9z" fill="#0080ff" />
        <path d="M226 423l36 5" stroke="#ff0000" strokeWidth="4" />
        <path d="M274 431l-13 2.500 2-9z" fill="#ff0000" />
        <path d="M226 422l4-9" stroke="#00ff00" strokeWidth="2" />
        <g className="font-['Open_Sans',sans-serif] text-[14px] font-light">
          <text x="218" y="378" fill="#0080ff">Z</text>
          <text x="239" y="418" fill="#00e000">Y</text>
          <text x="264" y="430" fill="#ff0000">X</text>
        </g>
      </svg>
    </div>
  );
}

const Spin = ({ label, v, cls = "w-[58px]" }) => (
  <div className={`flex h-[23px] shrink-0 items-center border border-[#7a7a7a] ${cls}`}>
    <input aria-label={label} defaultValue={v} className="w-full min-w-0 bg-transparent pr-[3px] text-right text-[#7a7a7a] outline-none" />
    <svg viewBox="0 0 16 21" className="h-[21px] w-4 shrink-0"><path d="M5 7l3-3 3 3zM5 15l3 3 3-3z" fill="#555" /></svg>
  </div>
);

function SnapBar() {
  return (
    <div className="flex h-[33px] shrink-0 gap-[2px] pl-[212px] pt-px">
      <Bar cls="h-[27px] pr-px">
        <Grip /><Item i="cross" t="交点" /><Item i="perp" t="垂点" on /><Item i="mid" t="中点" on /><Item i="vertex" t="顶点" /><Item i="coord" t="坐标" />
      </Bar>
      <Bar cls="h-[27px] pr-1 text-[#7a7a7a]">
        <Grip /><Combo label="偏移方式" v="不偏移" cls="w-[58px]" /><Sep />
        <span className="mx-[2px]">X=</span><Spin label="X" v="0" /><span className="ml-[2px] mr-1">mm</span>
        <span className="mx-[2px]">Y=</span><Spin label="Y" v="0" /><span className="mx-[2px]">mm</span><Sep />
        <label className="mx-[2px] flex items-center gap-2 text-black"><input type="checkbox" className="size-[11px] appearance-none border border-[#9a9a9a] bg-white" />旋转</label>
        <Spin label="旋转角度" v="0.000" cls="ml-[2px] w-[68px]" /><span className="ml-[2px]">°</span>
      </Bar>
    </div>
  );
}

const cols = [
  ["", "w-[33px]"], ["筋号", "w-[73px]"], ["直径(mm)", "w-[56px]"], ["级别", "w-[36px]"], ["图号", "w-[33px]"], ["图形", "w-[201px]"], ["计算公式", "w-[166px]"], ["公式描述", "w-[156px]"], ["弯曲调整(mm)", "w-[81px]"], ["长度(mm)", "w-[61px]"], ["根数", "w-[38px]"], ["搭接", "w-[39px]"], ["损耗(%)", "w-[49px]"], ["单重(kg)", "w-[61px]"], ["总重(kg)", "w-[61px]"], ["钢筋", "w-[46px]"],
];

const Nav = ({ label, d, cls = "w-6" }) => (
  <button type="button" aria-label={label} className={`flex shrink-0 justify-center ${cls}`}>
    <svg viewBox="0 0 14 14" className="size-[14px]"><path d={d} fill="#d2d2d2" stroke="#bdbdbd" /></svg>
  </button>
);

function Rebar() {
  return (
    <section className="flex min-h-0 flex-1 pr-[2px]">
      <div className="flex w-3 shrink-0 flex-col items-center pt-px">
        <button type="button" aria-label="关闭面板" className="shrink-0"><svg viewBox="0 0 10 10" className="size-[10px]"><rect x=".5" y=".5" width="9" height="9" fill="#e8c9c5" stroke="#222" /><path d="M2 2l6 6M8 2L2 8" stroke="#222" strokeWidth="1.500" /></svg></button>
        <svg className="mt-1 h-full w-[8px] min-h-0 flex-1"><defs><pattern id="pDots" width="4" height="5" patternUnits="userSpaceOnUse"><rect width="2" height="2" fill="#b0b0b0" /></pattern></defs><rect width="8" height="100%" fill="url(#pDots)" /></svg>
      </div>
      <div className="flex min-w-0 flex-1 flex-col">
        <Bar cls="mb-px ml-px mt-px h-[25px] shrink-0">
          <Nav label="首条" d="M2 2h2v10H2zM11 2v10L5 7z" cls="w-[22px]" /><Nav label="上一条" d="M9 2v10L4 7z" /><Nav label="下一条" d="M5 2v10l5-5z" /><Nav label="末条" d="M3 2v10l6-5zM10 2h2v10h-2z" />
          <Sep /><Nav label="上移" d="M7 2l4 4H9v5H5V6H3z" cls="w-[22px]" /><Nav label="下移" d="M7 12l4-4H9V3H5v5H3z" cls="w-[23px]" /><Sep />
          <Item i="ins" t="插入" off /><Item i="del" t="删除" off /><Item i="scale" t="缩尺配筋" off /><Item i="info" t="钢筋信息" off /><Item i="lib" t="钢筋图库" off /><Item i="other" t="其他" tight />
          <button type="button" className="ml-1 mr-[3px]">关闭</button><Sep />
          <span className="ml-[5px] whitespace-nowrap">单构件钢筋总重(kg)： 0</span>
        </Bar>
        <div className="flex min-h-0 flex-1 flex-col overflow-hidden border border-[#a0a0a0] bg-white">
          <div className="min-h-0 flex-1 overflow-hidden">
            <table className="w-[1190px] table-fixed border-collapse whitespace-nowrap">
              <thead>
                <tr className="h-5">
                  {cols.map(([t, w], k) => (
                    <th key={k} scope="col" className={`${w} border-b border-r border-[#b5b5b5] p-0 text-center font-normal leading-[18px] ${k === 2 ? "bg-gradient-to-b from-[#fadcaa] to-[#f2bf66] text-[#5a1040]" : "bg-gradient-to-b from-white to-[#ececec]"}`}>
                      <Sim>{t}</Sim>
                    </th>
                  ))}
                </tr>
              </thead>
              <tbody>
                <tr className="h-[19px]">
                  {cols.map(([t], k) => (
                    <td key={k} className={`border-b border-r border-[#b5b5b5] p-0 text-center leading-[18px] ${k === 0 ? "bg-[#ffd28a] text-[#5a1040]" : k === 1 ? "border-r-black" : k === 2 ? "bg-[#d9e9f7]" : ""}`}>{k === 0 && <Sim>1*</Sim>}</td>
                  ))}
                </tr>
              </tbody>
            </table>
          </div>
          <div className="mb-[2px] flex h-[17px] shrink-0 items-center bg-[#f0f0f0] pl-[5px] pr-1">
            <Chev d={LEFT} />
            <div className="ml-1 h-[15px] w-[65%] bg-[#cdcdcd]" />
            <Chev d={RIGHT} cls="ml-auto size-[9px]" />
          </div>
        </div>
      </div>
    </section>
  );
}

const Cell = ({ children, cls = "" }) => (
  <div className={`flex items-center border border-[#cfcfcf] bg-[#f7f7f7] ${cls}`}>{children}</div>
);

function Status() {
  return (
    <footer className="flex h-[21px] shrink-0 gap-[2px] bg-[#f0f0f0] pt-px">
      <Cell cls="w-[148px]"><Sim>X=182084 Y=6348</Sim></Cell>
      <Cell cls="w-[78px]"><Sim>层高:2.15m</Sim></Cell>
      <Cell cls="w-[98px]"><Sim>底标高:-2.2m</Sim></Cell>
      <Cell cls="w-[48px]"><Sim>0</Sim></Cell>
      <Cell cls="flex-1" />
      <Cell cls="w-[70px]"><Sim>309 FPS</Sim></Cell>
    </footer>
  );
}

const Task = ({ label, children, cls = "w-9", run, on }) => (
  <button type="button" aria-label={label} className={`flex h-full shrink-0 items-center justify-center border-b-[3px] ${run ? "border-[#76b9ed]" : "border-transparent"} ${on ? "bg-[#3c4a4f]" : ""} ${cls}`}>
    <svg viewBox="0 0 24 24" className="mt-[2px] size-6" fill="none">{children}</svg>
  </button>
);

function Taskbar() {
  return (
    <footer className="flex h-10 shrink-0 items-stretch bg-[#05161a] text-white">
      <button type="button" aria-label="开始" className="flex w-12 items-center justify-center bg-[#0a0a0a]"><svg viewBox="0 0 16 16" className="size-4" fill="#fff"><path d="M0 2.300l7-1v6.200H0zM8 1.200L16 0v7.500H8zM0 8.500h7v6.200l-7-1zM8 8.500h8V16l-8-1.200z" /></svg></button>
      <label className="flex w-[344px] items-center bg-[#f2f2f2] pl-2 text-[#333]">
        <svg viewBox="0 0 24 24" className="size-6 shrink-0"><circle cx="12" cy="12" r="9" fill="none" stroke="#0a0a0a" strokeWidth="3" /></svg>
        <input aria-label="搜索" placeholder="在这里输入你要搜索的内容" className="ml-2 min-w-0 flex-1 bg-transparent text-[14px] placeholder-[#333] outline-none" />
        <svg viewBox="0 0 14 20" className="mr-[13px] h-5 w-[14px]" fill="none" stroke="#333"><rect x="4.500" y=".5" width="5" height="13" rx="1.500" /><path d="M1.500 10v6h11v-6M7 16v3.500" /></svg>
      </label>
      <Task label="任务视图" cls="w-12"><path d="M4.500 4.500v2h9v-2M4.500 20v-2h9v2M4.500 9.500h9v5.500h-9zM17.500 4v16M16.500 8h3v3h-3z" stroke="#eee" /></Task>
      <Task label="四叶草" cls="w-[52px]"><path d="M11.500 11.500C5 13 1.500 10 1.500 6.500c0-5 7-6.500 9.500-2 1.500 3-.5 5 .5 7zM12.500 11.500C11 5 14 1.500 17.500 1.500c5 0 6.500 7 2 9.500-3 1.500-5-.5-7 .5zM12.500 12.500c6.500-1.500 10 1.500 10 5 0 5-7 6.500-9.500 2-1.500-3 .5-5-.5-7zM11.500 12.500c1.500 6.500-1.500 10-5 10-5 0-6.500-7-2-9.500 3-1.500 5 .5 7-.5z" fill="#eee" /></Task>
      <Task label="浏览器" cls="w-[52px]"><path d="M6 13.500h15M7 13c0-9 12-10 13 0M7 13c0 8 9 9 13 4" stroke="#eee" strokeWidth="3.300" /><path d="M3 21C0 17 12 2 21 3M3 21c2 2 6 0 8-1" stroke="#eee" strokeWidth="1.800" /></Task>
      <Task label="旋涡" cls="w-[52px]"><path d="M12 13c0-2 3-2 3 1s-6 5-8 1 1-9 6-9M18 12c2 6-2 10-7 10S2 18 2 13 6 5 10 4M6 12c0-3 3-5 6-4" stroke="#ccc" strokeWidth="1.300" /><path d="M19 0c3 0 4 2 4 5l1 4H14l1-4c0-3 1-5 4-5zM17 10h4l-2 2z" fill="#e5ae12" /></Task>
      <div className="ml-[3px] flex gap-[2px]">
        <Task label="Edge"><path d="M2 11C3 4 8 2 13 2c6 0 9 5 9 11H9c0 6 7 6 11 3v4c-6 4-16 2-16-6 0-4 3-6 5-7-3 0-5 1-7 4zM9 10h7c0-5-6-5-7 0z" fill="#0078d7" fillRule="evenodd" /></Task>
        <Task label="IE"><path d="M6 13.500h15M6 13c0-9 13-10 14 0M6 13c0 8 9 9 13 4" stroke="#4fb4ee" strokeWidth="4" /><path d="M2 21C-1 16 13 1 23 3" stroke="#f4c430" strokeWidth="2" /></Task>
        <Task label="文件夹" run><path d="M1 3h9l2 2h10v16H1z" fill="#f3c64e" /><path d="M1 7h21v14H1z" fill="#fde38d" /><path d="M6 21v-7h12v7h-4v-3h-4v3z" fill="#2f9ce0" /></Task>
        <Task label="360浏览器" run><circle cx="12" cy="12" r="10.500" fill="#2fb544" /><path d="M7 13h11M7 12.500c0-6 9-7 10 0M7 13c0 6 6 6 9 3.500" stroke="#fff" strokeWidth="2.600" /><path d="M3 19c4 0 14-6 18-13" stroke="#c9f07a" strokeWidth="1.500" /></Task>
        <Task label="邮件"><path d="M0 9l12-7 12 7v12H0z" fill="#fff" /><path d="M3 9h18l-7 5 3 3-6-3.500z" fill="#05161a" /></Task>
        <Task label="G" run><path d="M23 1c-1 3-4 4-9 5-6 1-8 8-3 11 4 1 6-1 6-4h-4l2-4h7c1 10-4 15-11 15C-1 24-3 7 9 3c5-1 10 0 14-2z" fill="#1597e8" /></Task>
        <Task label="广联达" run on><rect width="24" height="24" rx="4" fill="#1193f5" /><path d="M4 12.500h16M12 19.500V8.500c0-5 6-5 6-1M5 12.500c0 5 2 6.500 7 6.500 3 0 5-1 5-3.500" stroke="#fff" strokeWidth="2" /></Task>
        <Task label="记事本" run><rect width="24" height="24" rx="2" fill="#e58b18" /><path d="M4 4h14v16H4z" fill="#fff4d0" /><path d="M6 8h7M6 11h6M6 14h5" stroke="#b57a2a" /><path d="M8 18L21 3l2 2L12 18z" fill="#6b4215" /></Task>
      </div>
      <div className="ml-[5px] flex w-[17px] flex-col items-center justify-between bg-[#f0f0f0] py-[9px]"><Chev d={UP} /><Chev d={DOWN} /></div>
      <div className="flex flex-1 items-center justify-end text-center">
        <svg viewBox="0 0 16 16" className="mx-[23px] size-4" fill="none" stroke="#fff" strokeWidth="1.200"><circle cx="11.500" cy="3.500" r="2.700" /><circle cx="5.500" cy="7" r="2.500" /><path d="M1 15c0-6 9-6 9 0M8 9c3-3 7-2 7 3" /></svg>
        <p className="w-[60px] leading-[17px]">31%<br />CPU使用</p>
        <svg viewBox="0 0 12 8" className="ml-[14px] mr-[11px] h-2 w-3" fill="none" stroke="#fff" strokeWidth="1.300"><path d="M1 7l5-5 5 5" /></svg>
        <svg viewBox="0 0 18 16" className="mr-1 h-4 w-[18px]" fill="none" stroke="#fff"><path d="M6.500 4.500h10v8h-11v-3M17 7v3M2 1v3M5 1v3M.5 4.500h6v3l-3 2-3-2zM3.500 10v3h2" /></svg>
        <svg viewBox="0 0 16 16" className="mx-[5px] size-4" fill="none" stroke="#ddd"><path d="M2 14C2 8 8 2 14 2M5 14c0-5 4-9 9-9M8 14c0-3 3-6 6-6M11 14c0-2 1-3 3-3" /></svg>
        <svg viewBox="0 0 18 16" className="h-4 w-[18px]" fill="none" stroke="#fff"><path d="M.5 5.500h3l3-3v11l-3-3h-3zM9 5.500c1 2 1 3 0 5M11.500 3.500c2 3 2 6 0 9M14 2c3 4 3 8 0 12" /></svg>
        <svg viewBox="0 0 24 16" className="ml-[6px] mr-[7px] h-4 w-6" fill="none" stroke="#fff"><rect x=".5" y="1.500" width="22" height="12" /><path d="M3 4.500h18M3 7.500h18" strokeDasharray="2 1" strokeWidth="1.300" /><path d="M5 11h14" /></svg>
        <span className="w-[20px] text-[13px]">英</span>
        <svg viewBox="0 0 16 16" className="mx-[10px] size-4"><path d="M1 2l13-2 2 13-12 3z" fill="#f4511e" /><path d="M12 5C9 3 4 4 5 6s6 1 6 3-4 3-6 1" stroke="#fff" strokeWidth="2" fill="none" /></svg>
        <p className="w-[74px] leading-[18px]">16:11<br />2018/10/12</p>
        <button type="button" aria-label="通知" className="relative flex w-[40px] justify-center">
          <svg viewBox="0 0 18 18" className="size-[18px]"><path d="M1 0h16v13H9l-4 4v-4H1z" fill="#fff" /><path d="M4 4h10M4 7h10M4 10h6" stroke="#05161a" /></svg>
          <span className="absolute left-[19px] top-[6px] flex size-[16px] items-center justify-center rounded-full border border-[#aaa] bg-[#222] text-[12px] leading-none">1</span>
        </button>
        <div className="ml-[6px] mr-1 h-10 w-px bg-[#555]" />
      </div>
    </footer>
  );
}

export default function App() {
  return (
    <div className="relative flex h-screen flex-col overflow-hidden bg-[#f0f0f0] font-['Open_Sans','Noto_Sans_CJK_SC',sans-serif] text-[12px] leading-4 text-black">
      <svg className="absolute size-0" aria-hidden="true">{gradients}</svg>
      <Title />
      <MenuRow />
      <MainBar />
      <div className="flex min-h-0 flex-1">
        <Side />
        <main className="flex min-w-0 flex-1 flex-col pb-px pl-1">
          <EditBars />
          <Viewport />
          <SnapBar />
          <Rebar />
        </main>
      </div>
      <Status />
      <Taskbar />
      <Ime />
    </div>
  );
}
